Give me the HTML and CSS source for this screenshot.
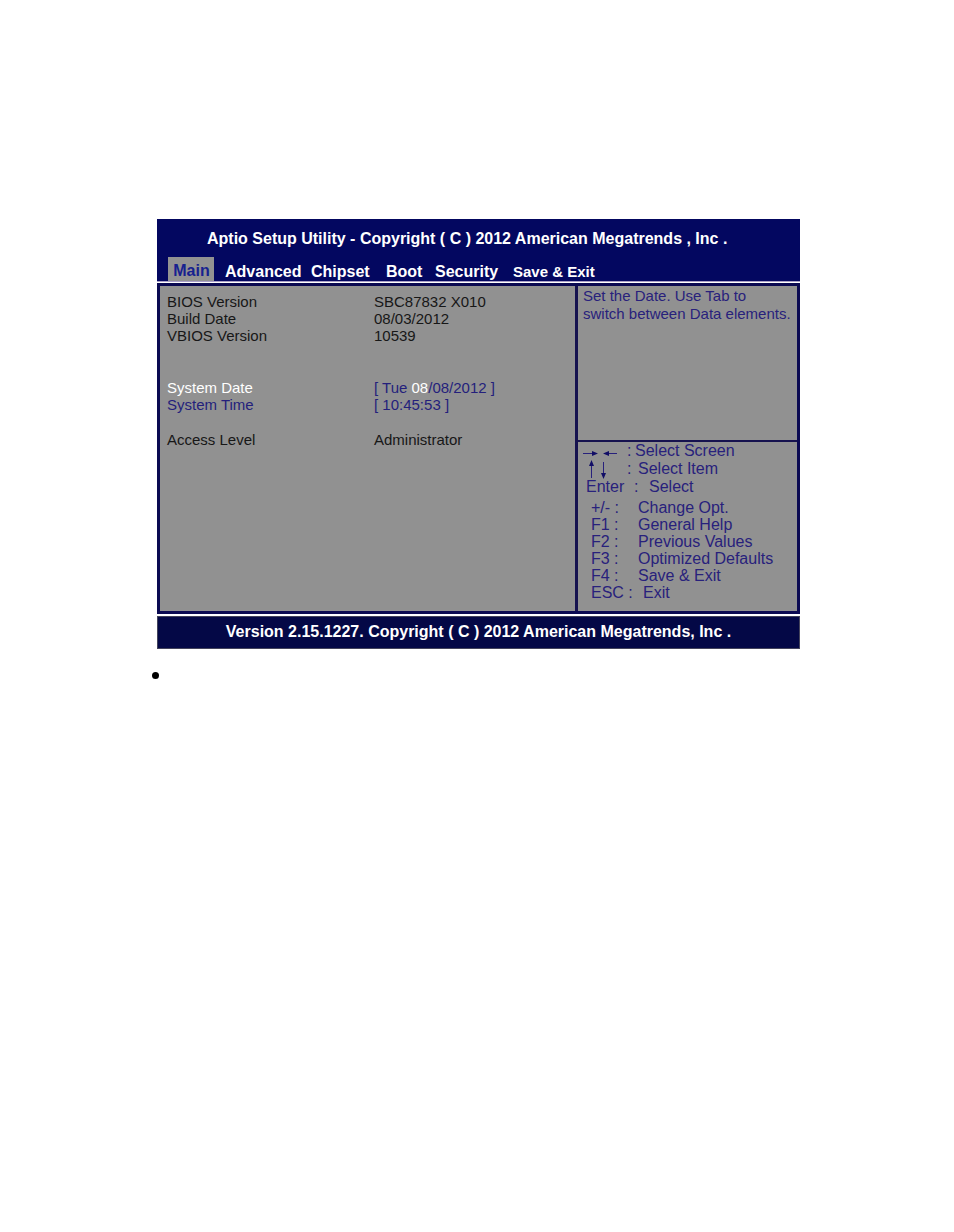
FILE: index.html
```
<!DOCTYPE html>
<html lang="en">
<head>
<meta charset="utf-8">
<title>Aptio Setup Utility</title>
<link rel="stylesheet" href="styles.css">
</head>
<body>
<main class="page">
  <section class="bios">
    <header class="header">
      <h1 class="title">Aptio Setup Utility - Copyright ( C ) 2012 American Megatrends , Inc .</h1>
      <nav class="tabs">
        <button class="tab active" type="button">Main</button>
        <button class="tab" type="button">Advanced</button>
        <button class="tab" type="button">Chipset</button>
        <button class="tab" type="button">Boot</button>
        <button class="tab" type="button">Security</button>
        <button class="tab compact" type="button">Save &amp; Exit</button>
      </nav>
    </header>
    <div class="content">
      <div class="settings">
        <table class="values">
          <tbody>
            <tr><th scope="row">BIOS Version</th><td>SBC87832 X010</td></tr>
            <tr><th scope="row">Build Date</th><td>08/03/2012</td></tr>
            <tr><th scope="row">VBIOS Version</th><td>10539</td></tr>
          </tbody>
        </table>
        <table class="values editable">
          <tbody>
            <tr><th scope="row" class="selected">System Date</th><td>[ Tue <span class="selected">08</span>/08/2012 ]</td></tr>
            <tr><th scope="row">System Time</th><td>[ 10:45:53 ]</td></tr>
          </tbody>
        </table>
        <table class="values">
          <tbody>
            <tr><th scope="row">Access Level</th><td>Administrator</td></tr>
          </tbody>
        </table>
      </div>
      <aside class="side">
        <p class="hint">Set the Date. Use Tab to<br>switch between Data elements.</p>
        <div class="keys">
          <dl class="group nav-keys">
            <div class="row screen">
              <dt><svg class="arrows" width="36" height="18" viewBox="0 0 36 18" role="img" aria-label="Right and left arrows"><path d="M0 11.500H11M22 11.500H34" /><path class="tip" d="M9 9L15 11.500L9 14ZM26 9L20 11.500L26 14Z"/></svg></dt><dd class="colon">:</dd><dd>Select Screen</dd>
            </div>
            <div class="row item">
              <dt><svg class="arrows" width="36" height="20" viewBox="0 0 36 20" role="img" aria-label="Up and down arrows"><path d="M8.500 5V18M20.500 2V14"/><path class="tip" d="M6 6L8.500 0L11 6ZM18 13L20.500 19L23 13Z"/></svg></dt><dd class="colon">:</dd><dd>Select Item</dd>
            </div>
            <div class="row enter"><dt>Enter</dt><dd class="colon">:</dd><dd>Select</dd></div>
          </dl>
          <dl class="group function-keys">
            <div class="row"><dt>+/- :</dt><dd>Change Opt.</dd></div>
            <div class="row"><dt>F1 :</dt><dd>General Help</dd></div>
            <div class="row"><dt>F2 :</dt><dd>Previous Values</dd></div>
            <div class="row"><dt>F3 :</dt><dd>Optimized Defaults</dd></div>
            <div class="row"><dt>F4 :</dt><dd>Save &amp; Exit</dd></div>
            <div class="row escape"><dt>ESC :</dt><dd>Exit</dd></div>
          </dl>
        </div>
      </aside>
    </div>
    <footer class="footer">Version 2.15.1227. Copyright ( C ) 2012 American Megatrends, Inc .</footer>
  </section>
  <ul class="notes"><li></li></ul>
</main>
</body>
</html>
```
FILE: styles.css
```
* { box-sizing: border-box; }
body {
  margin: 0;
  background: #fff;
  font-family: "Liberation Sans", Arial, sans-serif;
  font-size: 15px;
}
.page { padding: 219px 154px 0 157px; }
.bios { display: flex; flex-direction: column; }
.header {
  background: #030760;
  color: #fff;
  border-bottom: 1px solid #aaa0c8;
}
.title {
  margin: 0;
  padding: 10px 0 9px 50px;
  font-size: 16px;
  line-height: 19px;
  white-space: nowrap;
}
.tabs {
  display: grid;
  grid-template-columns: 57px 86px 75px 49px 78px auto;
  padding-left: 11px;
  justify-content: start;
}
.tab {
  justify-self: start;
  height: 24px;
  padding: 6px 0 0;
  border: 0;
  background: none;
  color: #fff;
  font: bold 16px/18px "Liberation Sans", Arial, sans-serif;
  white-space: nowrap;
}
.tab.active {
  width: 46px;
  padding: 4px 0 0 1px;
  background: #929292;
  color: #17218f;
}
.tab.compact { font-size: 15px; }
.content {
  display: grid;
  grid-template-columns: minmax(0, 1fr) 222px;
  min-height: 331px;
  margin: 1px 0 2px;
  border: 3px solid #0b0a52;
  background: #919191;
}
.settings { padding: 7px 0 0 7px; }
.values {
  border-collapse: collapse;
  line-height: 17px;
  margin-bottom: 35px;
  color: #171717;
}
.values th, .values td { padding: 0; text-align: left; font-weight: normal; white-space: nowrap; }
.values th { width: 207px; }
.values.editable { color: #241f7c; margin-bottom: 18px; }
.values .selected { color: #fff; }
.side {
  display: flex;
  flex-direction: column;
  border-left: 3px solid #16124f;
  color: #28217c;
}
.hint {
  margin: 0;
  height: 154px;
  padding: 1px 5px 0;
  line-height: 18px;
  white-space: nowrap;
}
.keys {
  flex: 1;
  border-top: 2px solid #16124f;
  font-size: 16px;
  line-height: 17px;
}
.group, .group dd { margin: 0; }
.row { display: flex; height: 18px; white-space: nowrap; }
.nav-keys { padding-left: 5px; }
.nav-keys dt { width: 44px; height: 18px; }
.nav-keys .colon { width: 8px; }
.nav-keys .item .colon { width: 11px; }
.nav-keys .enter { padding-left: 3px; }
.nav-keys .enter dt { width: 48px; }
.nav-keys .enter .colon { width: 15px; }
.function-keys { padding: 3px 0 0 13px; }
.function-keys dt { width: 47px; }
.function-keys .escape dt { width: 52px; }
.function-keys .row { height: 17px; }
.arrows { display: block; fill: none; stroke: #28217c; stroke-width: 1; }
.arrows .tip { fill: #120e66; stroke: none; }
.footer {
  padding: 6px 0 7px;
  border: 1px solid #44445c;
  background: #040846;
  color: #fff;
  font-size: 16px;
  font-weight: bold;
  line-height: 18px;
  text-align: center;
  white-space: nowrap;
}
.notes {
  margin: 23px 0 0;
  padding: 0;
  list-style: none;
}
.notes li::before {
  content: "";
  display: block;
  width: 7px;
  height: 7px;
  margin-left: -5px;
  border-radius: 50%;
  background: #000;
}
```
